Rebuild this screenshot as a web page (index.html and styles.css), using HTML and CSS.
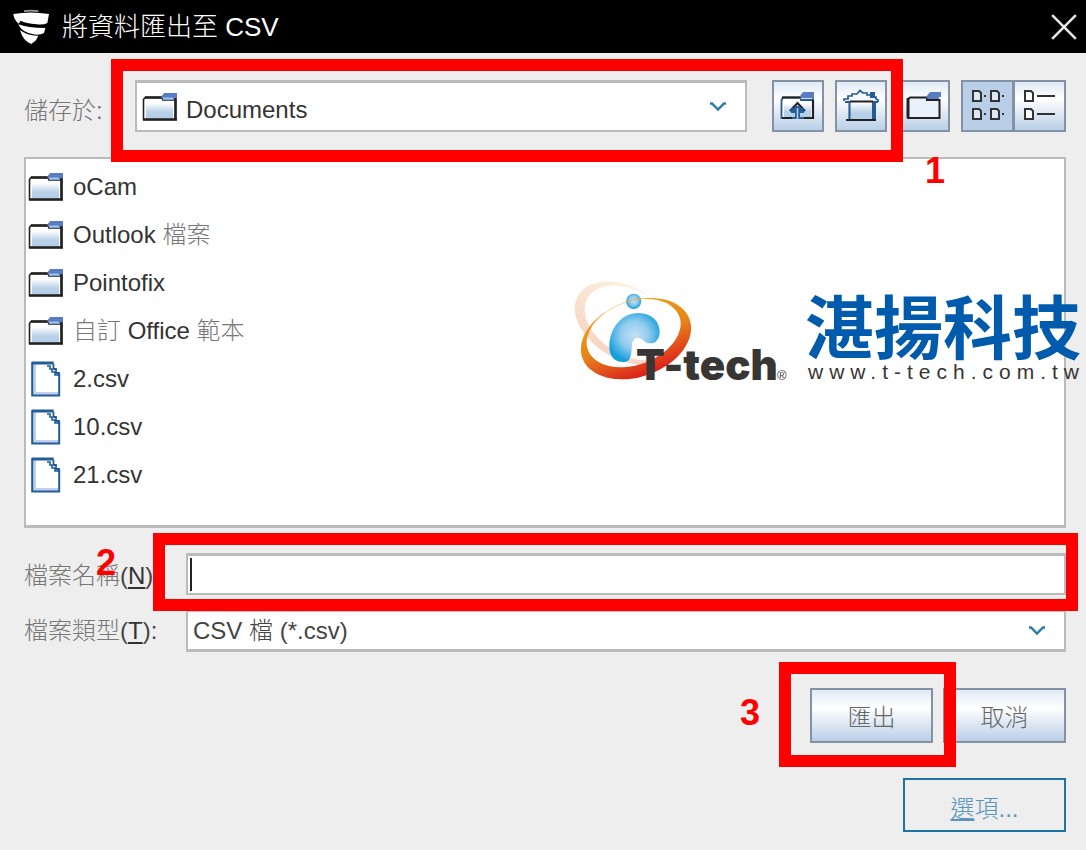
FILE: index.html
```html
<!DOCTYPE html>
<html lang="zh-Hant">
<head>
<meta charset="utf-8">
<title>將資料匯出至 CSV</title>
<link rel="stylesheet" href="styles.css">
</head>
<body>
<svg class="defs" width="0" height="0" aria-hidden="true">
  <defs>
    <linearGradient id="sheet" x1="0" y1="0" x2="0" y2="1"><stop offset="0.1" stop-color="#fff"/><stop offset="0.65" stop-color="#b8d0e8"/><stop offset="1" stop-color="#b4cde6"/></linearGradient>
    <linearGradient id="ring" x1="0" y1="0" x2="0" y2="1"><stop offset="0" stop-color="#f0a016"/><stop offset="0.5" stop-color="#e6851a"/><stop offset="1" stop-color="#dc1f1c"/></linearGradient>
    <linearGradient id="pale" x1="0" y1="0" x2="0" y2="1"><stop offset="0" stop-color="#fdeedd"/><stop offset="1" stop-color="#f6d5c4"/></linearGradient>
    <radialGradient id="blue" cx="0.5" cy="0.45" r="0.55"><stop offset="0" stop-color="#c2e0f5"/><stop offset="0.5" stop-color="#93ccee"/><stop offset="1" stop-color="#179fdb"/></radialGradient>
  </defs>
  <symbol id="folder" viewBox="0 0 36 28">
    <path d="M1.500 6.500 3 4.500H20L21 7H33.500V26.500H1.500Z" fill="#fff" stroke="#222" stroke-width="1.600"/>
    <path d="M3 4.500H20" stroke="#222" stroke-width="2.600"/>
    <path d="M4 8.500H31V25H4Z" fill="url(#sheet)"/>
    <path d="M33.500 3V27.500M1 26.500H35" stroke="#222" stroke-width="2.600"/>
    <path d="M19 4 22 0H35V5H32V7H22Z" fill="#5a7cc2"/>
    <path d="M21 4.500H31V6.500H21Z" fill="#a9c1e4"/>
  </symbol>
  <symbol id="file" viewBox="0 0 30 36">
    <path d="M1.200 1.200H21.500L28 14V34.500H1.200Z" fill="#fff"/>
    <path d="M3.500 3V32.500H27" fill="none" stroke="#bdd3ec" stroke-width="3"/>
    <path d="M22.500 2H1.200V34.500H28.200V13.500L26.500 13.500" fill="none" stroke="#235c96" stroke-width="2"/>
    <path d="M1 2H22.500" stroke="#235c96" stroke-width="3"/>
    <path d="M22.500 3V8H25V12H28V15" fill="none" stroke="#235c96" stroke-width="1.800"/>
    <path d="M16 5H19V8H21V11H24V14H27" fill="none" stroke="#235c96" stroke-width="1.600"/>
  </symbol>
</svg>

<main class="dialog">
  <header class="titlebar">
    <svg class="brand" viewBox="37 28 108 106" aria-hidden="true">
      <path d="M70 31Q90 27 113 31L113 36Q90 33 70 36Z" fill="#999"/>
      <path d="M38 42Q90 33 145 42L140 69Q130 75 108 73Q75 70 60 62L54 71Q40 60 38 42Z" fill="#fff"/>
      <path d="M53 73Q80 84 134 84L130 99Q118 106 98 103Q62 96 53 73Z" fill="#fff"/>
      <path d="M58 90Q80 108 113 107L106 121Q98 127 92 132Q66 122 58 90Z" fill="#fff"/>
    </svg>
    <h1 class="title">將資料匯出至 CSV</h1>
    <button class="close" aria-label="關閉"><svg viewBox="0 0 26 26"><path d="M2 2 24 24M24 2 2 24" stroke="#e8e8e8" stroke-width="2.400"/></svg></button>
  </header>

  <form class="content">
    <div class="toolbar">
      <label class="label" for="place">儲存於:</label>
      <div class="marked location">
        <div class="combo">
          <svg class="folder" aria-hidden="true"><use href="#folder"/></svg>
          <select id="place"><option>Documents</option></select>
          <svg class="chevron" viewBox="0 0 18 10" aria-hidden="true"><path d="M1 1.500H3L9 7.500 15 1.500H17" fill="none" stroke="#2b7ba8" stroke-width="2.400"/></svg>
        </div>
        <div class="tools">
          <button type="button" class="tool" aria-label="上一層"><svg viewBox="0 0 36 36">
            <path d="M1.500 12 3 9.500H21V12H33V30H1.500Z" fill="#fff" stroke="#235c96" stroke-width="1.800"/><path d="M4 14H31V29H4Z" fill="url(#sheet)"/>
            <path d="M2 9.500H21M33 12V30H24M2 30H12" fill="none" stroke="#222" stroke-width="2.200"/><path d="M20 8 23 4H34V11H21Z" fill="#5a7cc2"/><path d="M21 10.500H32" stroke="#dbe6f5"/>
            <path d="M10 23 17.500 15 25 23" fill="none" stroke="#222" stroke-width="2"/><path d="M17.500 18V30M11 22.500H24" stroke="#235c96" stroke-width="5"/><path d="M17.500 20V31" stroke="#b8d0e8" stroke-width="1.500"/>
          </svg></button>
          <button type="button" class="tool" aria-label="主目錄"><svg viewBox="0 0 36 36">
            <path d="M5 13H31V31H5Z" fill="url(#sheet)"/><path d="M1 12 5 9 10 6 17 2 24 5 31 9 35 12V13H1Z" fill="#f4f9fd"/>
            <path d="M1 13V11H5V8H9V6H14L17 2.500 20 5H24V7H28V9H33V11L35 12V14" fill="none" stroke="#235c96" stroke-width="1.700"/>
            <path d="M27 4H32V10H27Z" fill="#235c96"/><path d="M2 14H6.500V31M35 14H31" fill="none" stroke="#235c96" stroke-width="2"/><path d="M31 13V32" stroke="#235c96" stroke-width="4"/><path d="M7 13.500H30M3 32H33" stroke="#222" stroke-width="2"/>
          </svg></button>
        </div>
        <div class="highlight highlight-location"></div>
        <span class="step step-location">1</span>
      </div>
      <button type="button" class="tool" aria-label="新資料夾"><svg viewBox="0 0 36 36">
        <path d="M2 11 4 9.500H21V12H33.500V30H2Z" fill="#e9f1fa" stroke="#222" stroke-width="2"/><path d="M2 10V30" stroke="#222" stroke-width="3"/><path d="M20 9 24 4H35V9H33V11H22Z" fill="#5a7cc2"/>
      </svg></button>
      <div class="views">
        <button type="button" class="tool pressed" aria-label="清單" aria-pressed="true"><svg viewBox="0 0 36 36">
          <path d="M3 3H9L11 5V13H3ZM21 3H27L29 5V13H21ZM3 21H9L11 23V31H3ZM21 21H27L29 23V31H21Z" fill="#dce8f4" stroke="#333" stroke-width="2"/><path d="M14 8H16M32 8H34M14 26H16M32 26H34" stroke="#333" stroke-width="2"/>
        </svg></button>
        <button type="button" class="tool" aria-label="詳細資料" aria-pressed="false"><svg viewBox="0 0 36 36">
          <path d="M3 3H9L11 5V13H3ZM3 21H9L11 23V31H3Z" fill="#fff" stroke="#333" stroke-width="2"/><path d="M15 8H33M15 26H33" stroke="#333" stroke-width="2"/>
        </svg></button>
      </div>
    </div>

    <div class="browser">
      <ul class="files">
        <li><button type="button" class="entry"><svg class="folder"><use href="#folder"/></svg><span>oCam</span></button></li>
        <li><button type="button" class="entry"><svg class="folder"><use href="#folder"/></svg><span>Outlook <span class="han">檔案</span></span></button></li>
        <li><button type="button" class="entry"><svg class="folder"><use href="#folder"/></svg><span>Pointofix</span></button></li>
        <li><button type="button" class="entry"><svg class="folder"><use href="#folder"/></svg><span><span class="han">自訂</span> Office <span class="han">範本</span></span></button></li>
        <li><button type="button" class="entry"><svg class="file"><use href="#file"/></svg><span>2.csv</span></button></li>
        <li><button type="button" class="entry"><svg class="file"><use href="#file"/></svg><span>10.csv</span></button></li>
        <li><button type="button" class="entry"><svg class="file"><use href="#file"/></svg><span>21.csv</span></button></li>
      </ul>
      <div class="watermark">
        <div class="mark">
          <svg class="emblem" viewBox="0 0 720 390" aria-hidden="true">
            <path fill="url(#pale)" fill-rule="evenodd" transform="rotate(30 198 160)" d="M32 160A166 108 0 1 1 364 160A166 108 0 1 1 32 160ZM60 152A150 97 0 1 0 360 152A150 97 0 1 0 60 152Z"/>
            <path fill="url(#ring)" fill-rule="evenodd" transform="rotate(-20 228 206)" d="M57 206A171 114 0 1 1 399 206A171 114 0 1 1 57 206ZM81 188A146 95 0 1 0 373 188A146 95 0 1 0 81 188Z"/>
            <circle cx="221" cy="94" r="23" fill="url(#blue)"/>
            <path d="M198 96Q220 87 244 86" fill="none" stroke="#efa64a" stroke-width="3"/>
            <path d="M190 276C160 276 148 255 148 230C148 175 185 129 235 129C275 129 299 155 299 185C299 207 287 220 271 220C250 220 250 203 235 203C212 203 217 228 214 248C211 268 204 276 190 276Z" fill="url(#blue)"/>
          </svg>
          <span class="tech">T-tech</span><span class="registered">®</span>
        </div>
        <div class="company"><strong>湛揚科技</strong><span class="site">www.t-tech.com.tw</span></div>
      </div>
    </div>

    <div class="row name-row">
      <label class="label" for="name"><span class="han">檔案名稱</span>(<u>N</u>)</label>
      <div class="marked field">
        <input id="name" type="text">
        <span class="caret"></span>
        <div class="highlight highlight-name"></div>
      </div>
      <span class="step step-name">2</span>
    </div>
    <div class="row type-row">
      <label class="label" for="type"><span class="han">檔案類型</span>(<u>T</u>):</label>
      <div class="combo field">
        <select id="type"><option>CSV 檔 (*.csv)</option></select>
        <svg class="chevron" viewBox="0 0 18 10" aria-hidden="true"><path d="M1 1.500H3L9 7.500 15 1.500H17" fill="none" stroke="#2b7ba8" stroke-width="2.400"/></svg>
      </div>
    </div>

    <div class="actions">
      <div class="marked">
        <button type="button" class="action">匯出</button>
        <div class="highlight highlight-export"></div>
        <span class="step step-export">3</span>
      </div>
      <button type="button" class="action">取消</button>
    </div>
    <button type="button" class="options"><u>選</u>項...</button>
  </form>
</main>
</body>
</html>
```
FILE: styles.css
```css
* { box-sizing: border-box; }
body {
  margin: 0;
  background: #eee;
  color: #333;
  font: 24px/32px "Liberation Sans", "Noto Sans CJK TC", sans-serif;
  overflow-x: hidden;
}
button, input, select { font: inherit; color: inherit; margin: 0; padding: 0; border-radius: 0; }
svg { display: block; flex: none; }
.defs { position: absolute; }
.dialog { min-height: 100vh; position: relative; overflow: hidden; }

.titlebar { display: flex; align-items: center; height: 53px; padding: 0 8px 0 13px; background: #000; color: #fff; }
.brand { width: 36px; height: 36px; }
.title { flex: 1; margin: 0 0 0 13px; font-size: 26px; font-weight: 300; }
.close { border: 0; background: none; }
.close svg { width: 28px; height: 28px; }

.content { display: flex; flex-direction: column; padding: 27px 20px 18px 24px; }
.label, .han { color: #777; font-weight: 300; }
.label { flex: none; white-space: nowrap; }
.label u { color: #333; text-underline-offset: 3px; }
.name-row .label, .type-row .label { color: #444; }

.toolbar { display: flex; align-items: center; gap: 11px; margin-bottom: 25px; }
.toolbar .label { width: 100px; padding-top: 10px; }
.marked { position: relative; }
.location { display: flex; flex: 1; gap: 25px; z-index: 2; }
.combo { display: flex; flex: 1; align-items: center; height: 52px; border: 2px solid #bbb; border-top-width: 3px; background: #fff; padding: 0 18px 0 5px; }
.combo select { flex: 1; min-width: 0; height: 100%; padding-left: 8px; border: 0; background: none; appearance: none; outline: 0; }
.location .combo select { padding-top: 6px; }
.folder { width: 36px; height: 28px; }
.chevron { width: 18px; height: 10px; }
.tools { display: flex; gap: 11px; }
.tool { display: grid; place-items: center; width: 52px; height: 52px; border: 2px solid #8393a5; background: linear-gradient(#e0eaf5, #fff 35%, #b9cfe7); }
.tool svg { width: 36px; height: 36px; }
.views { display: flex; }
.views .pressed { width: 53px; background: #b9cfe7; }
.views .tool + .tool { border-left-width: 1px; }

.browser { position: relative; margin-bottom: 25px; border: 2px solid #bbb; border-bottom-width: 3px; background: #fff; }
.files { margin: 0; padding: 4px 2px 26px; list-style: none; }
.entry { display: flex; align-items: center; gap: 9px; width: 100%; height: 48px; border: 0; background: none; text-align: left; }
.file { width: 30px; height: 36px; margin: 0 3px; }

/* company mark laid over the file list */
.watermark { position: absolute; top: 111px; right: -21px; display: flex; color: #383635; }
.mark { position: relative; width: 245px; height: 130px; }
.emblem { width: 240px; height: 130px; }
.tech { position: absolute; left: 76px; top: 71px; font: 900 42px/48px Inter, sans-serif; }
.registered { position: absolute; left: 217px; top: 96px; font-size: 13px; line-height: 20px; }
.company { display: flex; flex-direction: column; width: 280px; white-space: nowrap; }
.company strong { color: #005bac; font: 700 69px/72px "Noto Sans CJK TC", sans-serif; padding-top: 18px; }
.site { padding-left: 3px; font-size: 21px; line-height: 24px; letter-spacing: 6px; }

.row { position: relative; display: flex; align-items: center; }
.row .label { width: 162px; padding-top: 4px; }
.field { flex: 1; }
.name-row { z-index: 2; margin-bottom: 14px; }
.name-row input { display: block; width: 100%; height: 42px; padding: 0 6px; border: 2px solid #bbb; border-top-width: 3px; background: #fff; outline: 0; }
.caret { position: absolute; left: 4px; top: 5px; bottom: 4px; width: 2px; background: #222; }
.type-row .combo { height: 43px; padding-left: 0; border-bottom-width: 3px; }
.type-row .label { padding-top: 0; }
.type-row select { padding-left: 5px; color: #444; font-weight: 300; }

.actions { display: flex; justify-content: flex-end; gap: 10px; margin: 36px 0 35px; }
.actions .marked { z-index: 2; }
.action { display: block; width: 123px; height: 55px; padding-top: 5px; border: 2px solid #8393a5; background: linear-gradient(#e0eaf5, #fff 35%, #b9cfe7); color: #666; font-weight: 300; }
.options { align-self: flex-end; width: 163px; height: 54px; padding-top: 8px; border: 2px solid #1c75a5; background: none; color: #5795bb; font-weight: 300; }

/* numbered tutorial callouts */
.highlight { position: absolute; border: 12px solid #f00; pointer-events: none; }
.highlight-location { top: -21px; right: -16px; bottom: -30px; left: -24px; }
.highlight-name { top: -20px; right: -12px; bottom: -16px; left: -33px; }
.highlight-export { top: -26px; right: -23px; bottom: -24px; left: -31px; }
.step { position: absolute; color: #f00; font-size: 36px; line-height: 40px; font-weight: 700; }
.step-location { right: -58px; top: 71px; }
.step-name { left: 72px; top: -10px; }
.step-export { left: -70px; top: 5px; }
```
